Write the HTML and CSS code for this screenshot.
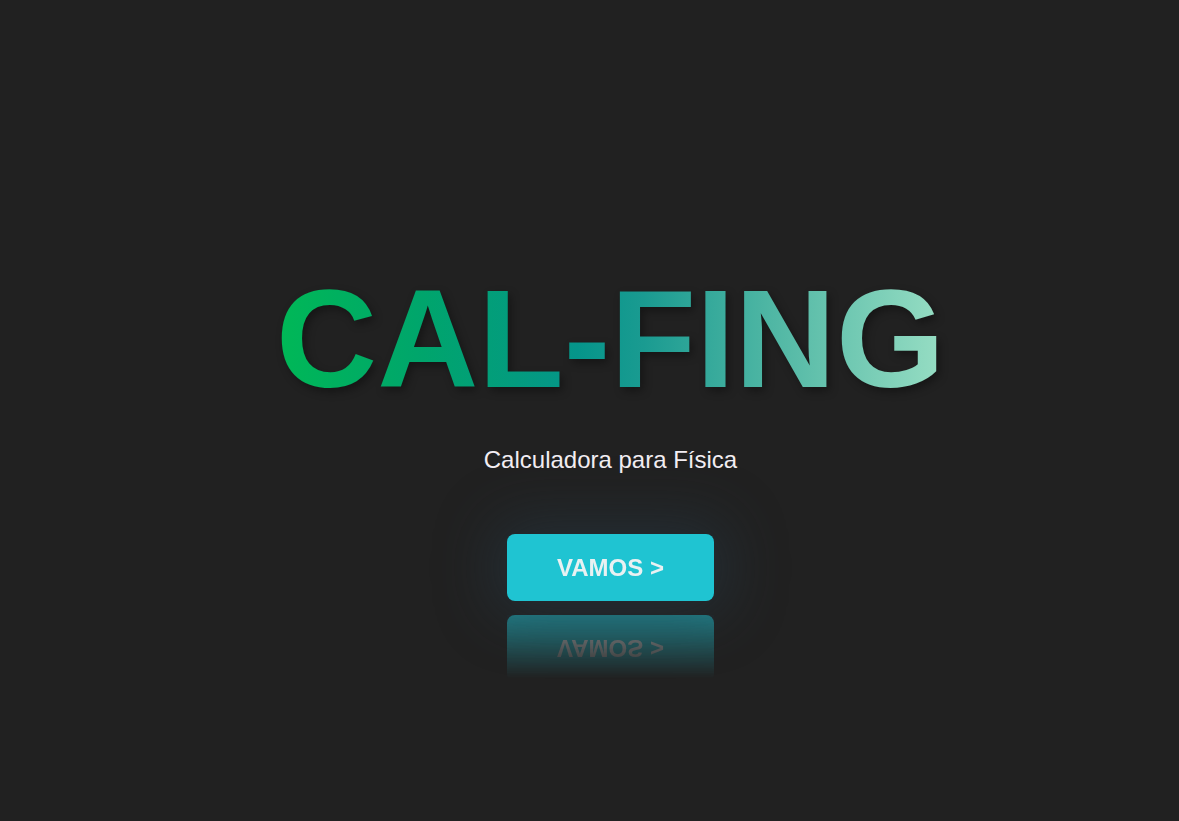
FILE: index.html
```html
<!DOCTYPE html>
<html lang="es">
<head>
<meta charset="utf-8">
<title>CAL-FING</title>
<link rel="stylesheet" href="styles.css">
</head>
<body>
<main class="hero">
  <h1 class="title">CAL-FING</h1>
  <p class="subtitle">Calculadora para Física</p>
  <button class="cta" type="button">VAMOS &gt;</button>
</main>
</body>
</html>
```
FILE: styles.css
```css
html, body {
  margin: 0;
  padding: 0;
  background: #212121;
}
body {
  font-family: "Liberation Sans", Arial, sans-serif;
  min-height: 100vh;
}
.hero {
  display: flex;
  flex-direction: column;
  align-items: center;
  padding-top: 258px;
  padding-left: 42px;
}
.title {
  margin: 0;
  font-size: 140px;
  font-weight: 700;
  line-height: normal;
  background: linear-gradient(90deg, #00b856 0%, #00a56c 22%, #05958a 45%, #1a9b91 55%, #52b8a5 75%, #98dec4 100%);
  -webkit-background-clip: text;
  background-clip: text;
  color: transparent;
  -webkit-text-fill-color: transparent;
  filter: drop-shadow(3px 4px 4px rgba(0, 0, 0, 0.35));
}
.subtitle {
  margin: 26px 0 0;
  font-size: 24px;
  line-height: normal;
  color: #f3eef3;
}
.cta {
  margin-top: 60px;
  width: 207px;
  height: 67px;
  border: none;
  border-radius: 8px;
  background: #1fc4d2;
  color: #e9f1f2;
  font-family: "Liberation Sans", Arial, sans-serif;
  font-size: 24px;
  font-weight: 700;
  cursor: pointer;
  box-shadow: 0 0 60px 12px rgba(40, 62, 78, 0.45);
  -webkit-box-reflect: below 14px linear-gradient(transparent 5%, rgba(0, 0, 0, 0.55));
}
```
